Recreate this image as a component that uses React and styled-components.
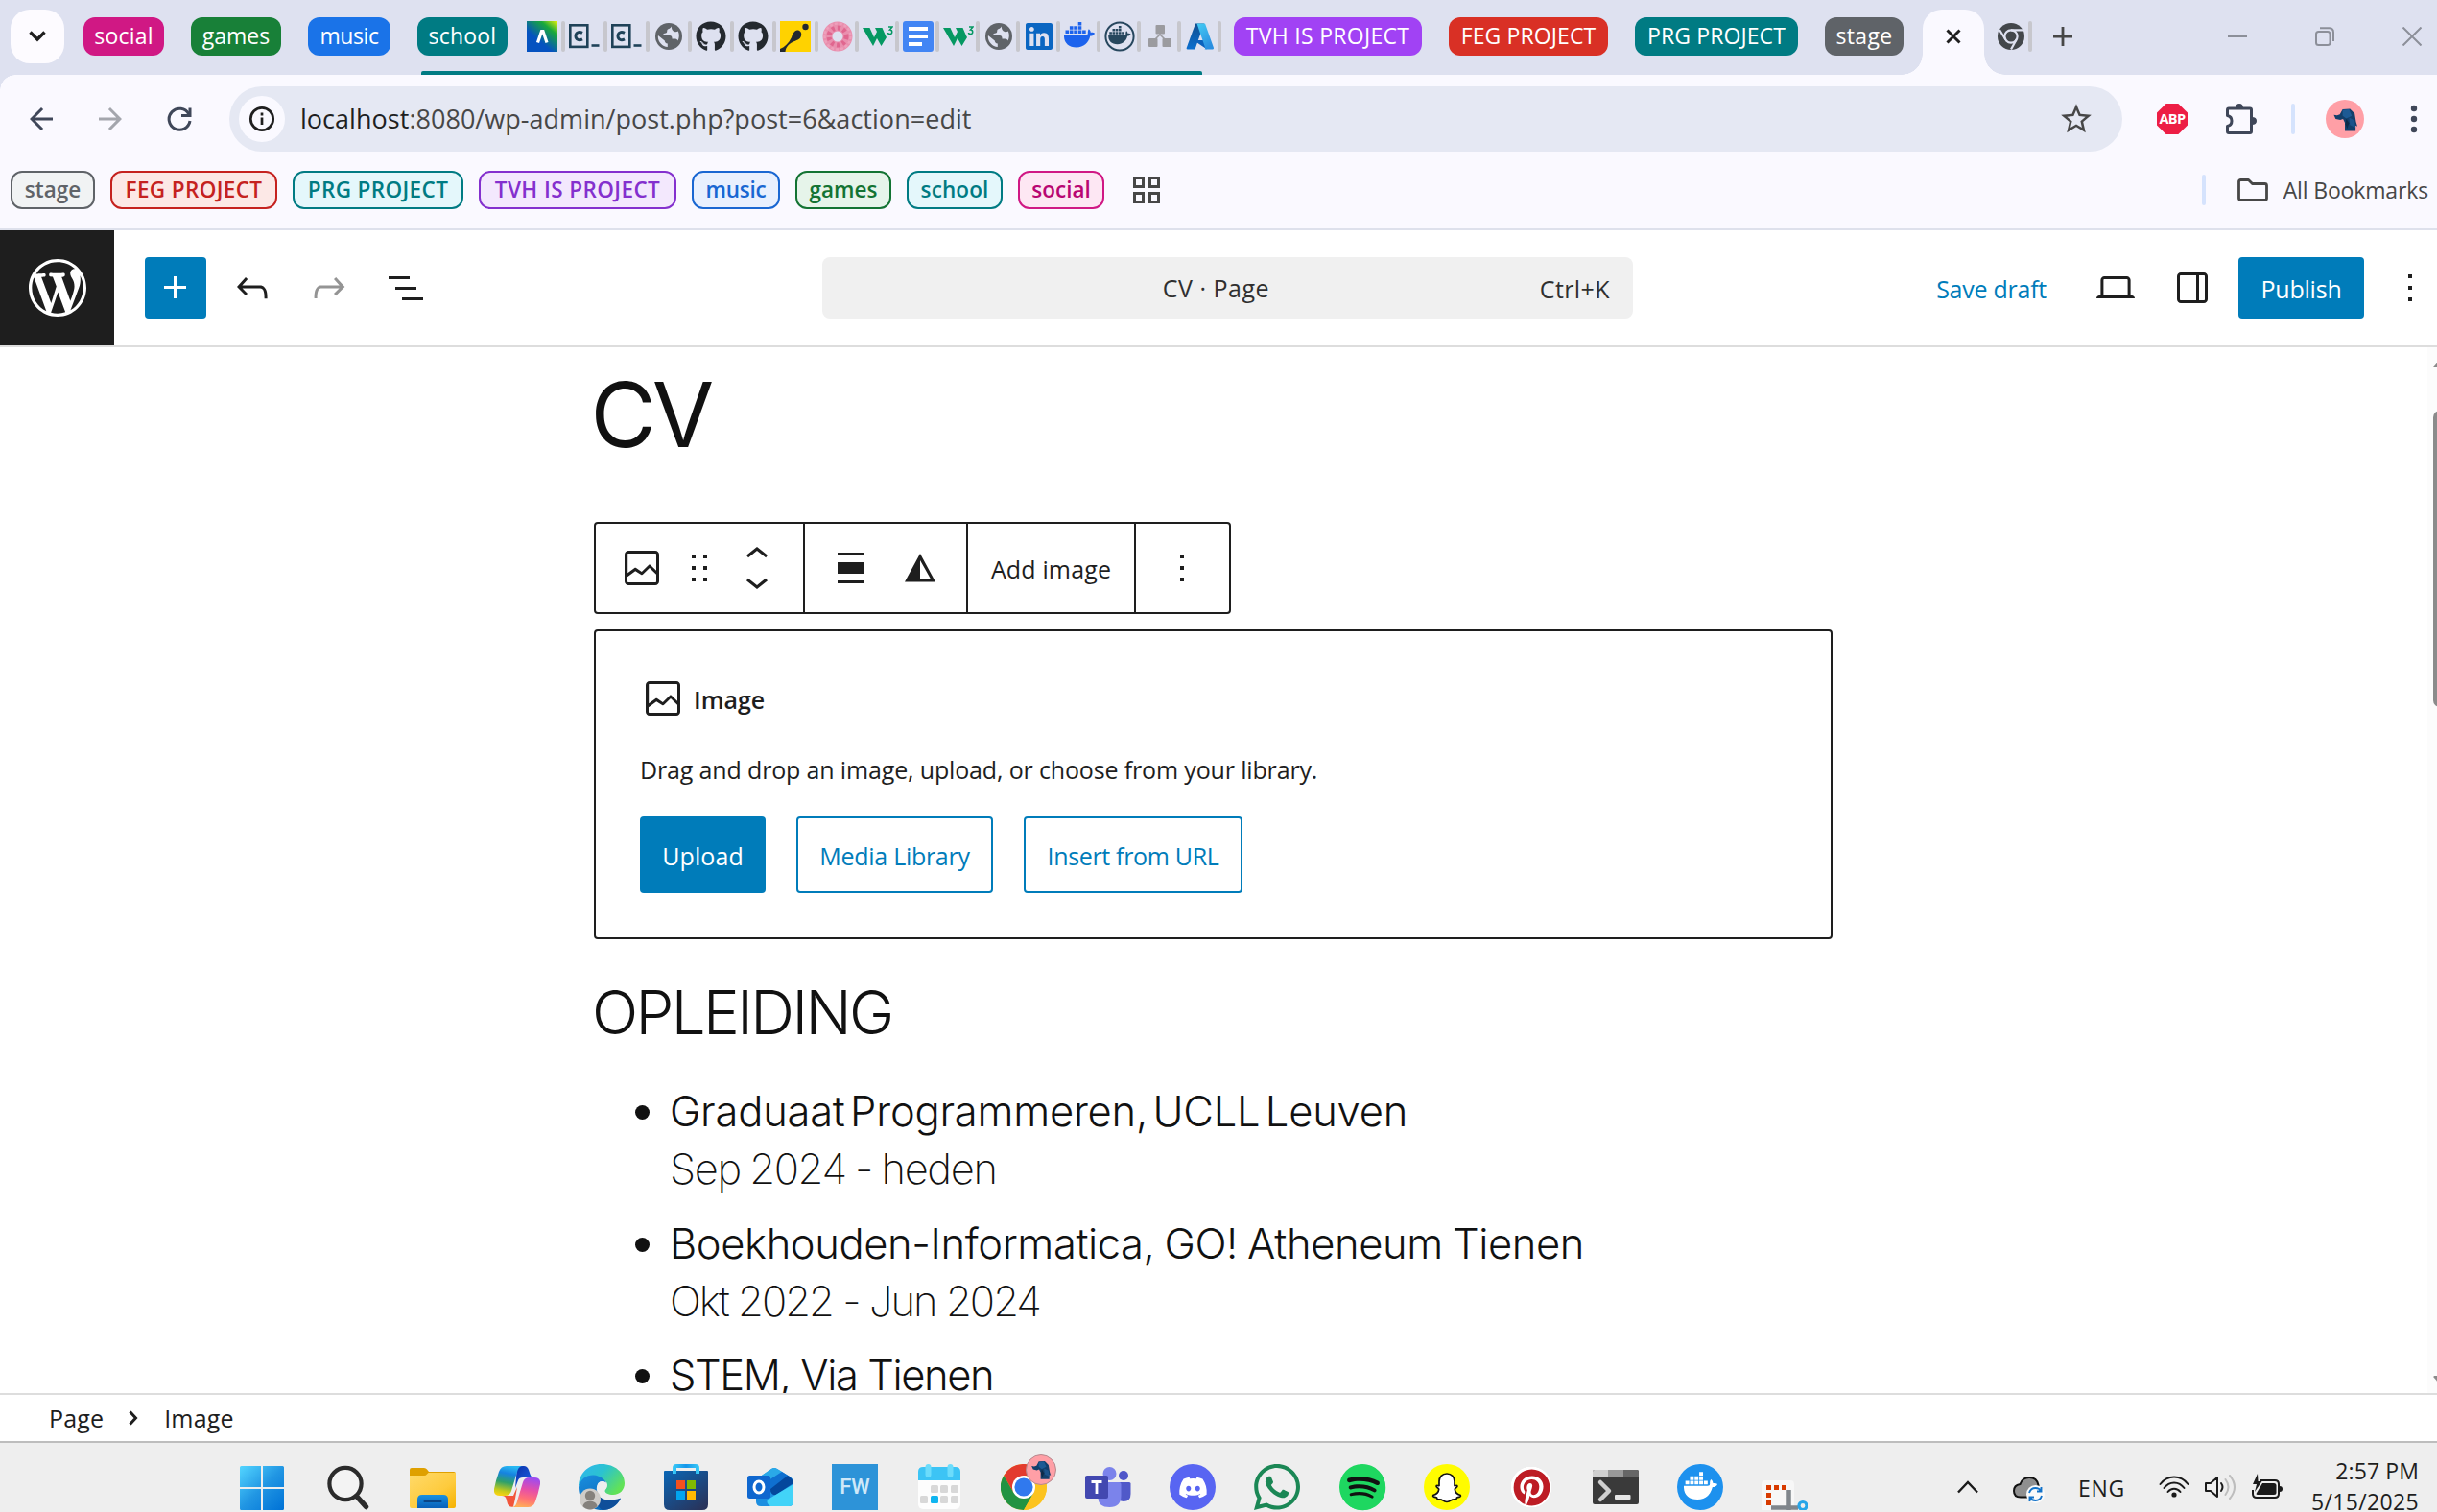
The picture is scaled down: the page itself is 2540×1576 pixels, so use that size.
import React from "react";
import styled, { createGlobalStyle, css } from "styled-components";
import {
  FaGithub, FaLinkedin, FaDiscord, FaWhatsapp, FaSpotify, FaPinterest,
} from "react-icons/fa";
import { MdPublic, MdStarBorder, MdArrowBack, MdArrowForward } from "react-icons/md";

const UI = `"Open Sans", "Noto Sans", sans-serif`;
const DOC = `Inter, Roboto, sans-serif`;

const Global = createGlobalStyle`
  *, *::before, *::after { box-sizing: border-box; }
  html, body { margin: 0; padding: 0; background: #fff; }
  svg { display: block; flex: none; }
`;

const Page = styled.div`
  width: 2540px;
  height: 1576px;
  display: flex;
  flex-direction: column;
  overflow: hidden;
  background: #fff;
  font-family: ${UI};
  color: #1e1e1e;
  white-space: nowrap;
`;

const Label = styled.span`
  letter-spacing: ${(p) => p.$ls || 0}px;
`;

/* ---------- tab strip ---------- */

const TabStrip = styled.div`
  height: 78px;
  flex: none;
  display: flex;
  align-items: center;
  padding: 0 16px 2px 11px;
  background: #dee1f0;
`;

const TabSearch = styled.div`
  width: 56px;
  height: 56px;
  margin-right: 20px;
  border-radius: 20px;
  background: #fdfbff;
  display: grid;
  place-items: center;
`;

const GroupList = styled.div`
  display: flex;
  align-items: center;
  gap: 28px;
`;

const GroupChip = styled.div`
  width: ${(p) => p.$w}px;
  height: 40px;
  padding-bottom: 2px;
  border-radius: 12px;
  display: flex;
  flex: none;
  align-items: center;
  justify-content: center;
  background: ${(p) => p.$bg};
  color: #fff;
  font-size: 23px;
  line-height: 32px;
`;

const OpenGroup = styled.div`
  position: relative;
  display: flex;
  align-items: center;
  height: 76px;
  margin-right: 13px;
  &::after {
    content: "";
    position: absolute;
    left: 4px;
    bottom: -2px;
    width: 814px;
    height: 4px;
    border-radius: 2px 2px 0 0;
    background: #007b83;
  }
`;

const PinnedTabs = styled.div`
  display: flex;
  margin-left: 20px;
`;

const MiniTab = styled.div`
  display: flex;
  align-items: center;
  gap: ${(p) => (p.$wide ? 4 : 2)}px;
  margin-right: ${(p) => (p.$last ? 0 : 4)}px;
  &::after {
    content: "";
    width: 4px;
    height: 32px;
    border-radius: 2px;
    background: #c7c7cd;
  }
`;

const Favicon = styled.div`
  width: 32px;
  height: 32px;
  display: grid;
  place-items: center;
  color: ${(p) => p.$color || "#5f6368"};
`;

const ActiveTab = styled.div`
  position: relative;
  width: 64px;
  height: 68px;
  margin: 0 12px -2px 20px;
  align-self: flex-end;
  padding-bottom: 12px;
  display: grid;
  place-items: center;
  border-radius: 20px 20px 0 0;
  background: #faf9ff;
  &::before, &::after {
    content: "";
    position: absolute;
    bottom: 0;
    width: 22px;
    height: 22px;
  }
  &::before {
    left: -22px;
    background: radial-gradient(circle at 0 0, transparent 21.5px, #faf9ff 22px);
  }
  &::after {
    right: -22px;
    background: radial-gradient(circle at 100% 0, transparent 21.5px, #faf9ff 22px);
  }
`;

const NewTab = styled.div`
  margin-left: 18px;
`;

const WindowControls = styled.div`
  display: flex;
  gap: 71px;
  margin-left: auto;
`;

/* ---------- address row ---------- */

const AddressRow = styled.div`
  height: 92px;
  flex: none;
  display: flex;
  align-items: center;
  padding-left: 15px;
  background: radial-gradient(circle at 16px 16px, #faf9ff 15.5px, #dee1f0 16px) 0 0 / 16px 16px no-repeat, #faf9ff;
`;

const NavButtons = styled.div`
  display: flex;
  gap: 16px;
  margin-right: 24px;
`;

const IconBox = styled.div`
  width: ${(p) => p.$w || 56}px;
  height: ${(p) => p.$w || 56}px;
  flex: none;
  display: grid;
  place-items: center;
  color: ${(p) => p.$color || "#3f4759"};
`;

const Omnibox = styled.div`
  width: 1973px;
  flex: none;
  height: 68px;
  padding: 0 24px 0 10px;
  border-radius: 34px;
  background: #e5e8f3;
  display: flex;
  align-items: center;
`;

const InfoBadge = styled.div`
  width: 48px;
  height: 48px;
  border-radius: 50%;
  background: #faf9ff;
  display: grid;
  place-items: center;
`;

const Url = styled.div`
  flex: 1;
  margin-left: 16px;
  font-size: 27px;
  line-height: 40px;
  letter-spacing: 0.03px;
  color: #474747;
  b { font-weight: 400; color: #1f1f1f; }
`;

const Extensions = styled.div`
  display: flex;
  align-items: center;
  gap: 16px;
  margin-left: 24px;
`;

const AbpBadge = styled.div`
  width: 32px;
  height: 32px;
  background: #ed1e45;
  clip-path: polygon(30% 0, 70% 0, 100% 30%, 100% 70%, 70% 100%, 30% 100%, 0 70%, 0 30%);
  color: #fff;
  display: grid;
  place-items: center;
  font: 700 14.5px/20px ${UI};
  letter-spacing: -0.6px;
`;

const Divider = styled.div`
  width: 4px;
  height: 32px;
  flex: none;
  margin: ${(p) => p.$m || "0"};
  border-radius: 2px;
  background: #d5e3fd;
`;

const Avatar = styled.div`
  width: ${(p) => p.$s}px;
  height: ${(p) => p.$s}px;
  flex: none;
  border-radius: 50%;
  background: #ff9fa6;
  border: ${(p) => (p.$ring ? "1.5px solid #b58a8f" : "0")};
  display: grid;
  place-items: center;
`;

const MenuDots = styled.div`
  margin-left: 48px;
  color: #3f4759;
`;

/* ---------- bookmarks ---------- */

const BookmarkBar = styled.div`
  height: 70px;
  flex: none;
  display: flex;
  align-items: center;
  gap: 16px;
  padding: 0 0 12px 11px;
  border-bottom: 2px solid #dee1ec;
  background: #faf9ff;
`;

const Bookmark = styled.div`
  width: ${(p) => p.$w}px;
  height: 40px;
  padding-bottom: 1px;
  flex: none;
  display: flex;
  align-items: center;
  justify-content: center;
  border: 2px solid ${(p) => p.$line};
  border-radius: 12px;
  background: ${(p) => p.$bg};
  color: ${(p) => p.$ink || p.$line};
  font-size: 22.5px;
  font-weight: 600;
  line-height: 32px;
`;

const AppsGrid = styled.div`
  display: grid;
  grid-template-columns: 12px 12px;
  gap: 4px;
  margin-left: 14px;
  i { height: 12px; border: 3px solid #474747; }
`;

const AllBookmarks = styled.div`
  display: flex;
  align-items: center;
  gap: 16px;
  margin-left: auto;
  padding-right: 9px;
  font-size: 23px;
  line-height: 32px;
  color: #474747;
  span { padding-bottom: 1px; }
`;

/* ---------- editor header ---------- */

const EditorHeader = styled.div`
  height: 122px;
  flex: none;
  display: flex;
  align-items: center;
  border-bottom: 2px solid #ddd;
  background: #fff;
`;

const SiteLogo = styled.div`
  width: 119px;
  height: 120px;
  display: grid;
  place-items: center;
  background: #1e1e1e;
  color: #fff;
`;

const DocTools = styled.div`
  width: 738px;
  padding-left: 32px;
  display: flex;
  align-items: center;
  gap: 16px;
`;

const ToolButton = styled.div`
  width: 64px;
  height: 64px;
  flex: none;
  display: grid;
  place-items: center;
  border-radius: 4px;
  ${(p) => p.$primary && css`background: #007cba; color: #fff;`}
  ${(p) => p.$off && css`color: #949494;`}
`;

const CommandBar = styled.div`
  width: 845px;
  height: 64px;
  border-radius: 8px;
  background: #f0f0f0;
  display: grid;
  grid-template-columns: 1fr auto 1fr;
  align-items: center;
  padding: 0 24px;
  font-size: 25px;
  line-height: 34px;
  color: #2f2f2f;
`;

const DocTitle = styled.div`
  grid-column: 2;
  padding: 0 24px 0 0;
`;

const Shortcut = styled.div`
  justify-self: end;
  padding-top: 2px;
`;

const Settings = styled.div`
  display: flex;
  align-items: center;
  gap: 16px;
  margin: 0 -4px 0 auto;
`;

const TextButton = styled.div`
  height: ${(p) => p.$h || 64}px;
  width: ${(p) => (p.$w ? p.$w + "px" : "auto")};
  padding: 2px ${(p) => (p.$w ? 0 : 24)}px 0;
  flex: none;
  display: flex;
  align-items: center;
  justify-content: center;
  border-radius: 4px;
  font-size: 25px;
  line-height: 34px;
  color: #007cba;
  ${(p) => p.$kind === "primary" && css`background: #007cba; color: #fff;`}
  ${(p) => p.$kind === "outline" && css`border: 2px solid #007cba;`}
`;

/* ---------- canvas ---------- */

const Canvas = styled.div`
  height: 1090px;
  flex: none;
  display: flex;
  overflow: hidden;
`;

const Document = styled.div`
  flex: 1;
  padding-left: 619px;
  color: #111;
  font-family: ${DOC};
`;

const Title = styled.h1`
  margin: 0 0 42px;
  height: 140px;
  font-size: 93.5px;
  line-height: 140px;
  font-weight: 380;
  letter-spacing: -4px;
  text-indent: -3.5px;
`;

const BlockToolbar = styled.div`
  width: 664px;
  height: 96px;
  margin-bottom: 16px;
  display: flex;
  border: 2px solid #1e1e1e;
  border-radius: 4px;
  color: #1e1e1e;
  font-family: ${UI};
`;

const ToolGroup = styled.div`
  width: ${(p) => p.$w}px;
  padding-left: ${(p) => (p.$center ? 0 : 24)}px;
  display: flex;
  align-items: center;
  justify-content: ${(p) => (p.$center ? "center" : "flex-start")};
  gap: ${(p) => p.$gap || 0}px;
  border-right: 2px solid #1e1e1e;
  font-size: 25px;
  &:last-child { border-right: 0; padding-right: 2px; }
  span { padding-top: 2px; }
`;

const Movers = styled.div`
  display: flex;
  flex-direction: column;
`;

const Placeholder = styled.div`
  width: 1291px;
  height: 323px;
  padding: 46px;
  border: 2px solid #1e1e1e;
  border-radius: 4px;
  color: #1e1e1e;
  font-family: ${UI};
  font-size: 25px;
`;

const BlockName = styled.div`
  display: flex;
  align-items: center;
  gap: 8px;
  font-weight: 600;
  span { padding-top: 2px; }
`;

const Instructions = styled.div`
  margin: 34px 0 33px;
  line-height: 32px;
`;

const Actions = styled.div`
  display: flex;
  gap: 32px;
`;

const Heading = styled.h2`
  margin: 40px 0 37px;
  font-size: 63.5px;
  line-height: 72px;
  font-weight: 340;
  letter-spacing: -2.6px;
  text-indent: -2px;
`;

const Entries = styled.ul`
  margin: 0;
  padding: 0 0 0 43px;
  list-style: none;
  display: flex;
  flex-direction: column;
  gap: 17.5px;
`;

const Entry = styled.li`
  display: grid;
  grid-template-columns: 36px 1fr;
  font-size: 43.5px;
  line-height: 60px;
`;

const Bullet = styled.i`
  width: 15px;
  height: 15px;
  margin-top: 24px;
  border-radius: 50%;
  background: #111;
`;

const EntryLine = styled.div`
  grid-column: 2;
  font-weight: ${(p) => (p.$light ? 255 : 360)};
  letter-spacing: ${(p) => p.$ls}px;
  word-spacing: ${(p) => p.$ws || 0}px;
`;

const ScrollTrack = styled.div`
  width: 10px;
  height: 100%;
  padding: 12px 0 9px 6px;
  display: flex;
  flex-direction: column;
  background: #fcfcfc;
  overflow: hidden;
`;

const ScrollThumb = styled.div`
  width: 14px;
  height: 309px;
  flex: none;
  margin: 45px 0 auto;
  border-radius: 7px;
  background: #8b8b8b;
`;

/* ---------- footer ---------- */

const Breadcrumb = styled.div`
  height: 52px;
  flex: none;
  display: flex;
  align-items: center;
  padding-left: 51px;
  border-top: 2px solid #ddd;
  border-bottom: 2px solid #bdbdbd;
  font-size: 25px;
  svg { margin: 0 27px 0 26px; }
`;

const Taskbar = styled.div`
  flex: 1;
  min-height: 0;
  display: flex;
  align-items: flex-start;
  padding: 22px 19px 0 249px;
  background: #eee;
`;

const Apps = styled.div`
  display: flex;
  gap: 40px;
`;

const AppSlot = styled.div`
  position: relative;
  width: 48px;
  height: 48px;
  margin-right: ${(p) => p.$mr || 0}px;
`;

const ProfileDot = styled.div`
  position: absolute;
  left: 26px;
  top: -10px;
`;

const Disc = styled.div`
  width: 48px;
  height: 48px;
  border-radius: 50%;
  display: grid;
  place-items: center;
  background: ${(p) => p.$bg};
  color: #fff;
`;

const SpotifyDisc = styled(Disc)`
  background: radial-gradient(circle, #111 60%, #1ed760 62%);
`;

const PinDisc = styled(Disc)`
  background: radial-gradient(circle, #fff 21px, transparent 21.5px);
  color: #bd1c24;
`;

const FwTile = styled.div`
  width: 48px;
  height: 48px;
  display: grid;
  place-items: center;
  background: #2d93d8;
  color: #cfe8f8;
  font: 500 22px/26px Roboto, sans-serif;
`;

const Tray = styled.div`
  height: 48px;
  margin-left: auto;
  display: flex;
  align-items: center;
  font-size: 23px;
`;

const CloudBox = styled.div`
  margin-left: 36px;
  padding-top: 4px;
`;

const Lang = styled.div`
  margin: 0 35px;
  padding-top: 2px;
`;

const TrayIcons = styled.div`
  display: flex;
  align-items: center;
  gap: 16px;
`;

const Clock = styled.div`
  width: 142px;
  align-self: flex-start;
  margin-top: -9px;
  text-align: right;
  line-height: 32px;
`;

/* ---------- drawings ---------- */

const Glyph = ({ d, size = 48 }) => (
  <svg width={size} height={size} viewBox="0 0 24 24" fill="currentColor"><path d={d} /></svg>
);

const G = {
  plus: "M11 12.5V17.5H12.5V12.5H17.5V11H12.5V6H11V11H6V12.5H11Z",
  undo: "M18.3 11.7c-.6-.6-1.4-.9-2.3-.9H6.7l2.9-3.3-1.1-1-4.5 5L8.5 16l1-1-2.7-2.7H16c.5 0 .9.2 1.3.5 1 1 1 3.4 1 4.5v.3h1.5v-.2c0-1.5 0-4.3-1.5-5.7z",
  redo: "M15.6 6.5l-1.1 1 2.9 3.3H8c-.9 0-1.7.3-2.3.9-1.4 1.5-1.4 4.2-1.4 5.6v.2h1.5v-.3c0-1.1 0-3.5 1-4.5.3-.3.7-.5 1.3-.5h9.2L14.5 15l1.1 1.1 4.6-4.6-4.6-5z",
  list: "M3 6h11v1.5H3V6Zm3.5 5.5h11V13h-11v-1.5ZM21 17H10v1.5h11V17Z",
  desktop: "M20.5 16h-.7V8c0-1.1-.9-2-2-2H6.2c-1.1 0-2 .9-2 2v8h-.7c-.8 0-1.5.7-1.5 1.5h20c0-.8-.7-1.5-1.5-1.5zM5.7 8c0-.3.2-.5.5-.5h11.6c.3 0 .5.2.5.5v7.6H5.7V8z",
  drawer: "M18 4H6c-1.1 0-2 .9-2 2v12c0 1.1.9 2 2 2h12c1.1 0 2-.9 2-2V6c0-1.1-.9-2-2-2zm-4 14.5H6c-.3 0-.5-.2-.5-.5V6c0-.3.2-.5.5-.5h8v13zm4.5-.5c0 .3-.2.5-.5.5h-2.5v-13H18c.3 0 .5.2.5.5v12z",
  more: "M13 19h-2v-2h2v2zm0-6h-2v-2h2v2zm0-6h-2V5h2v2z",
  image: "M19 3H5c-1.1 0-2 .9-2 2v14c0 1.1.9 2 2 2h14c1.1 0 2-.9 2-2V5c0-1.1-.9-2-2-2zM5 4.5h14c.3 0 .5.2.5.5v8.4l-3-2.9c-.3-.3-.8-.3-1 0L11.9 14 9 12c-.3-.2-.6-.2-.8 0l-3.6 2.6V5c-.1-.3.1-.5.4-.5zm14 15H5c-.3 0-.5-.2-.5-.5v-2.4l4.1-3 3 1.9c.3.2.7.2.9-.1L16 12l3.5 3.4V19c0 .3-.2.5-.5.5z",
  drag: "M8 7h2V5H8v2zm0 6h2v-2H8v2zm0 6h2v-2H8v2zm6-14v2h2V5h-2zm0 8h2v-2h-2v2zm0 6h2v-2h-2v2z",
  up: "M6.5 12.4L12 8l5.5 4.4-.9 1.2L12 10l-4.5 3.6-1-1.2z",
  down: "M17.5 11.6L12 16l-5.5-4.4.9-1.2L12 14l4.5-3.6 1 1.2z",
  align: "M19 5.5H5V4h14v1.5ZM19 20H5v-1.5h14V20ZM5 9h14v6H5V9Z",
  wordpress: "M20 10c0-5.51-4.49-10-10-10C4.48 0 0 4.49 0 10c0 5.52 4.48 10 10 10 5.51 0 10-4.48 10-10zM7.78 15.37L4.37 6.22c.55-.02 1.17-.08 1.17-.08.5-.06.44-1.13-.06-1.11 0 0-1.45.11-2.37.11-.18 0-.37 0-.58-.01C4.12 2.69 6.87 1.11 10 1.11c2.33 0 4.45.87 6.05 2.34-.68-.11-1.65.39-1.65 1.58 0 .74.45 1.36.9 2.1.35.61.55 1.36.55 2.46 0 1.49-1.4 5-1.4 5l-3.03-8.37c.54-.02.82-.17.82-.17.5-.05.44-1.25-.06-1.22 0 0-1.44.12-2.38.12-.87 0-2.33-.12-2.33-.12-.5-.03-.56 1.2-.06 1.22l.92.08 1.26 3.41zM17.41 10c.24-.64.74-1.87.43-4.25.7 1.29 1.05 2.71 1.05 4.25 0 3.29-1.73 6.24-4.4 7.78.97-2.59 1.94-5.2 2.92-7.78zM6.1 18.09C3.12 16.65 1.11 13.53 1.11 10c0-1.3.23-2.48.72-3.59C3.25 10.3 4.67 14.2 6.1 18.09zm4.03-6.63l2.58 6.98c-.86.29-1.76.45-2.71.45-.79 0-1.57-.11-2.29-.33.81-2.38 1.63-4.74 2.42-7.1z",
};

const Elephant = ({ size }) => (
  <svg width={size} height={size} viewBox="0 0 28 28">
    <path d="M1.500 9l3.500.5 3-1 3-5.500 8-.5 5 5 1.500 9 1.500 5-2-1v6H13.500v-9l-2-4-3 1-5-1z" fill="#123f6b" />
    <path d="M11 4l7-1 3 7-6 3-4-3z" fill="#1d5a94" />
    <path d="M18 12l6 3 1 8-6-3z" fill="#1b528a" />
    <path d="M15 13l3 5-2 6-2-5z" fill="#0c2a48" />
  </svg>
);

const CTerminal = () => (
  <svg width="32" height="32" viewBox="0 0 32 32" fill="none" stroke="#1f4258">
    <rect x="1.3" y="4.3" width="18" height="22.6" strokeWidth="2.600" />
    <path d="M14 12.400c-3.800-2-7-.2-7 3.200s3.200 5.200 7 3.200" strokeWidth="3" />
    <path d="M23.500 25.500h8" strokeWidth="2.600" />
  </svg>
);

const W3 = () => (
  <svg width="32" height="32" viewBox="0 0 32 32" fill="none" stroke="#059862">
    <path d="M0 7h7.500l4.500 10 3-6-2-4h7.500l3 7 1.500 3-5.500 9-4.500-8-4 8z" fill="#059862" stroke="none" />
    <path d="M27 6h4l-2.500 3c3 0 3 4.500 0 4.500-1 0-2-.5-2-1.500" strokeWidth="1.500" />
  </svg>
);

const Whale = ({ size, color, ring }) => (
  <svg width={size} height={size} viewBox="0 0 32 32">
    {ring && <circle cx="16" cy="16" r="14.600" fill="none" stroke={color} strokeWidth="2" />}
    <g transform={ring ? "translate(4.200 4.200) scale(.73)" : undefined} fill={color}>
      <path d="M0 14.500h22.500c1.800 0 2.500-.8 2.300-2.600-.1-1.500.3-2.700 1-3.600 1.300 1 1.900 2.200 2 3.600 1.500-.2 3.200 0 4.200.9-.8 2-2.500 2.800-4.700 2.800C25.500 23 20.500 27.500 13 27.500 4.500 27.500-.4 22.500 0 14.500z" />
      <path d="M1.500 9.500h3.600V13H1.500zM5.900 9.500h3.600V13H5.900zM10.300 9.500h3.600V13h-3.600zM14.700 9.500h3.600V13h-3.600zM5.900 5.300h3.600v3.500H5.900zM10.300 5.300h3.600v3.500h-3.600zM14.700 5.300h3.600v3.500h-3.600zM14.700 1.100h3.600v3.500h-3.600zM19.100 9.500h3.600V13h-3.600z" />
    </g>
  </svg>
);

const ChromeMono = () => (
  <svg width="28" height="28" viewBox="0 0 28 28">
    <circle cx="14" cy="14" r="14" fill="#43474b" />
    <circle cx="14" cy="14" r="6.600" fill="none" stroke="#dee1f0" strokeWidth="2.200" />
    <path d="M14 7.400h12.600M8.300 17.300L2 7M19.700 17.300L14 27.500" stroke="#dee1f0" strokeWidth="2.200" fill="none" />
  </svg>
);

const Globe = () => (
  <svg width="32" height="32" viewBox="0 0 32 32">
    <circle cx="16" cy="16" r="14" fill="#5f6368" />
    <path d="M19 5.500c-1 2-3.500 2.500-4.500 3.500-.5 1.500 0 3-1.500 3.500-2 .5-3 .5-3 2.500h7c2 0 2.500 1.500 2.500 3.500H23c1.500 0 2 1 2.500 2 1.500-3 1.800-6.500.3-10-1 .5-2.300 1-3.800.5-2-.5-3.500-3-3-5.500zM4.800 16c0 6 4.700 10.500 10 11v-3.500c-2 0-3-1.500-3-3L5 15z" fill="#dee1f0" />
  </svg>
);

const favicons = [
  { k: "a", wide: 1, el: (
    <svg width="32" height="32" viewBox="0 0 32 32">
      <defs><linearGradient id="fa" x1="1" y1="0" x2=".25" y2=".9"><stop offset="0" stopColor="#e8f20a" /><stop offset=".3" stopColor="#18a83c" /><stop offset=".75" stopColor="#0552c0" /></linearGradient></defs>
      <path d="M0 0h32v32H0z" fill="url(#fa)" />
      <path d="M11.500 22.500l4-12h1.500l4 12" fill="none" stroke="#fff" strokeWidth="3.200" />
    </svg>) },
  { k: "b", wide: 1, el: <CTerminal /> },
  { k: "c", wide: 1, el: <CTerminal /> },
  { k: "d", wide: 1, el: <Globe /> },
  { k: "e", wide: 1, color: "#24292f", el: <FaGithub size={32} /> },
  { k: "f", wide: 1, color: "#24292f", el: <FaGithub size={32} /> },
  { k: "g", wide: 1, el: (
    <svg width="32" height="32" viewBox="0 0 32 32">
      <path d="M0 0h32v32H0z" fill="#ffd200" />
      <circle cx="26.500" cy="6" r="3.200" fill="#24292f" />
      <path d="M0 32v-3c5-2 9-6 12-12 1-4 3-7 6-7.500 3 0 5 2.500 4 6-1 4-5 4.500-9 6.500-4 2-7 5-7.500 10z" fill="#24292f" />
    </svg>) },
  { k: "h", el: (
    <svg width="32" height="32" viewBox="0 0 32 32" fill="none">
      <circle cx="16" cy="16" r="10.500" stroke="#e98fae" strokeWidth="10" />
      <circle cx="16" cy="16" r="9" stroke="#e0668f" strokeWidth="5" strokeDasharray="3 3" />
      <circle cx="16" cy="16" r="13.500" stroke="#ee9fbb" strokeWidth="2.500" strokeDasharray="3 2" />
    </svg>) },
  { k: "i", el: <W3 /> },
  { k: "j", el: (
    <svg width="32" height="32" viewBox="0 0 32 32">
      <rect width="32" height="32" rx="3" fill="#4285f4" />
      <path d="M6 6h20v4H6zM6 14h20v4H6zM6 22h14v4H6z" fill="#fff" />
    </svg>) },
  { k: "k", el: <W3 /> },
  { k: "l", el: <Globe /> },
  { k: "m", color: "#0a66c2", el: <FaLinkedin size={32} /> },
  { k: "n", el: <Whale size={32} color="#1d63ed" /> },
  { k: "o", el: <Whale size={32} color="#27475e" ring /> },
  { k: "p", el: (
    <svg width="32" height="32" viewBox="0 0 32 32" fill="#9b9b9f">
      <path d="M16 9v5L8 22M16 14l8 8" stroke="#9b9b9f" strokeWidth="1.600" fill="none" />
      <rect x="11.500" y="4" width="9.500" height="9.500" rx="1" /><rect x="4" y="18" width="9.500" height="9" rx="1" /><rect x="18.500" y="18" width="9.500" height="9" rx="1" />
    </svg>) },
  { k: "q", last: 1, el: (
    <svg width="32" height="32" viewBox="0 0 32 32">
      <defs>
        <linearGradient id="az" x1="0" y1="0" x2="0" y2="1"><stop offset="0" stopColor="#124f8f" /><stop offset="1" stopColor="#0a6fd0" /></linearGradient>
        <linearGradient id="az2" x1="0" y1="0" x2=".5" y2="1"><stop offset="0" stopColor="#43ccf5" /><stop offset="1" stopColor="#2a8fe0" /></linearGradient>
      </defs>
      <path d="M11 2.500h9L10.500 29.500H2.500q-1.200-.3-.8-1.500z" fill="url(#az)" />
      <path d="M9 20h12l2 9.500z" fill="#0b62bd" />
      <path d="M12.500 2.500h8.500l9 25.500q.2 1.300-1 1.500H20.500q1-.6.5-2z" fill="url(#az2)" />
    </svg>) },
];

const groupsLeft = [
  { t: "social", w: 84, bg: "#d01884", ls: 0.2 },
  { t: "games", w: 94, bg: "#188038", ls: 0 },
  { t: "music", w: 86, bg: "#1a73e8", ls: -0.4 },
];
const groupsRight = [
  { t: "TVH IS PROJECT", w: 196, bg: "#a142f4", ls: 0.3 },
  { t: "FEG PROJECT", w: 166, bg: "#d93025", ls: 0.1 },
  { t: "PRG PROJECT", w: 170, bg: "#007b83", ls: 0.1 },
  { t: "stage", w: 82, bg: "#5f6368", ls: 0.3 },
];
const bookmarks = [
  { t: "stage", w: 88, line: "#5f6368", bg: "#f1f3f4", ls: 0 },
  { t: "FEG PROJECT", w: 174, line: "#c5221f", bg: "#fce8e6", ls: 0.35 },
  { t: "PRG PROJECT", w: 178, line: "#007b83", bg: "#e4f7fb", ls: 0.35 },
  { t: "TVH IS PROJECT", w: 206, line: "#8430ce", bg: "#f3e8fd", ls: 0.4 },
  { t: "music", w: 92, line: "#1967d2", bg: "#e8f0fe", ls: -0.2 },
  { t: "games", w: 100, line: "#137333", bg: "#e6f4ea", ls: 0 },
  { t: "school", w: 100, line: "#007b83", bg: "#e4f7fb", ls: 0.1 },
  { t: "social", w: 90, line: "#d01884", bg: "#fde7f3", ink: "#b80672", ls: 0 },
];

const entries = [
  [{ t: "Graduaat Programmeren, UCLL Leuven", ls: -0.23, ws: -6.5 }, { t: "Sep 2024 - heden", ls: -1.35, ws: -1.5 }],
  [{ t: "Boekhouden-Informatica, GO! Atheneum Tienen", ls: -0.4, ws: -1.7 }, { t: "Okt 2022 - Jun 2024", ls: -1.95, ws: 0 }],
  [{ t: "STEM, Via Tienen", ls: -1.4, ws: 0 }, null],
];

/* ---------- taskbar drawings ---------- */

const Svg48 = ({ children }) => <svg width="48" height="48" viewBox="0 0 48 48">{children}</svg>;

const WindowsIcon = () => (
  <Svg48>
    <defs><linearGradient id="win" gradientUnits="userSpaceOnUse" x1="2" y1="2" x2="46" y2="48"><stop offset="0" stopColor="#52d4ff" /><stop offset=".5" stopColor="#2196e3" /><stop offset="1" stopColor="#0072d6" /></linearGradient></defs>
    <path d="M2.500 2H23v22H1V3.500Q1 2 2.500 2zM25 2h20.500Q47 2 47 3.500V24H25zM1 26h22v22H2.500Q1 48 1 46.500zM25 26h22v20.500q0 1.500-1.500 1.500H25z" fill="url(#win)" />
  </Svg48>
);
const SearchIcon = () => (
  <Svg48><g fill="none" stroke="#2b2b2b" strokeLinecap="round"><circle cx="21" cy="20.500" r="16.600" fill="#f3f3f3" strokeWidth="4.200" /><path d="M33.500 34.500L42.500 44.500" strokeWidth="5.500" /></g></Svg48>
);
const FolderIcon = () => (
  <Svg48>
    <defs>
      <linearGradient id="fo" x1="0" y1="0" x2="1" y2="1"><stop offset="0" stopColor="#ffda6b" /><stop offset=".6" stopColor="#fecb3d" /><stop offset="1" stopColor="#f5b100" /></linearGradient>
      <linearGradient id="fo2" x1="0" y1="0" x2="0" y2="1"><stop offset="0" stopColor="#1791e0" /><stop offset="1" stopColor="#0a5fb8" /></linearGradient>
    </defs>
    <path d="M0 6q0-2 2-2h13q2 0 3 1.500l2 2.500h26q2 0 2 2v4H0z" fill="#dfa000" />
    <path d="M0 12h15q2 0 3-1.500L19.500 9H48v35q0 2-2 2H2q-2 0-2-2z" fill="url(#fo)" />
    <path d="M8 46V37q0-5 5-5h22q5 0 5 5v9z" fill="url(#fo2)" />
    <path d="M15.500 39h17" stroke="#0b4586" strokeWidth="2.200" strokeLinecap="round" />
  </Svg48>
);
const CopilotIcon = () => (
  <Svg48>
    <defs>
      <linearGradient id="co1" x1=".5" y1="0" x2=".3" y2="1"><stop offset="0" stopColor="#28b8f2" /><stop offset=".25" stopColor="#1683e0" /><stop offset=".55" stopColor="#2fa06a" /><stop offset=".85" stopColor="#c9cc18" /><stop offset="1" stopColor="#f9d212" /></linearGradient>
      <linearGradient id="co2" x1=".6" y1="0" x2=".4" y2="1"><stop offset="0" stopColor="#9d4cf0" /><stop offset=".4" stopColor="#e64fa8" /><stop offset=".7" stopColor="#ff6f77" /><stop offset="1" stopColor="#ffae58" /></linearGradient>
      <linearGradient id="co3" x1="0" y1="0" x2="1" y2="1"><stop offset="0" stopColor="#0a2fa8" /><stop offset="1" stopColor="#1f6df0" /></linearGradient>
    </defs>
    <path d="M24 2h7q3.500 0 5 4l1.500 4.500q1 3.500 4.500 3.500H30q-4 0-5 3l-3 8z" fill="url(#co3)" />
    <path d="M8 33h12l4-9-2 12-2 8.500q-4 1-6-3L12.500 36q-1-3-4.500-3z" fill="#f2553a" />
    <path d="M13 2h17q-4 0-5.500 4.500L18 28q-1.500 5-7 5H6q-7 0-6-7 2-10 5-18 2-6 8-6z" fill="url(#co1)" />
    <path d="M35 45H18q4 0 5.500-4.500L30 19q1.500-5 7-5h5q7 0 6 7-2 10-5 18-2 6-8 6z" fill="url(#co2)" />
  </Svg48>
);
const EdgeIcon = () => (
  <Svg48>
    <defs>
      <linearGradient id="ed1" x1="0" y1="0" x2="1" y2=".6"><stop offset="0" stopColor="#2fb4f2" /><stop offset=".5" stopColor="#2bc3cf" /><stop offset="1" stopColor="#62e257" /></linearGradient>
      <linearGradient id="ed2" x1="0" y1="0" x2=".6" y2="1"><stop offset="0" stopColor="#1a8fdf" /><stop offset="1" stopColor="#0b67b8" /></linearGradient>
    </defs>
    <path d="M0 24C0 10 10 0 24 0s24 9 24 20c0 7-5 12-12 12-5 0-8.500-2-8.500-4 0-1.500 2.500-3 2.500-6 0-4-3-5-8-6C14 12 4 14 0 24z" fill="url(#ed1)" />
    <path d="M0 24C2 15 9 11 16 11.500c6 .5 11 4 13 8-5-3-11 0-10 8 1 8 9 14 25 8.500-4 8-11 12-19 12C10 48 0 38 0 24z" fill="url(#ed2)" />
    <path d="M19 27c0 8 9 14 25 8.500-4 8-11 12.500-19 12.500-6-3-9-14-6-21z" fill="#0f4f9a" />
    <circle cx="24.500" cy="23" r="5" fill="#eee" />
    <circle cx="12" cy="36.500" r="11" fill="#cfccc8" />
    <circle cx="12" cy="33" r="5.200" fill="#85817c" />
    <path d="M4.500 44c1-7 14-7 15 0-3.500 4.500-11.500 4.500-15 0z" fill="#85817c" />
  </Svg48>
);
const StoreIcon = () => (
  <Svg48>
    <defs>
      <linearGradient id="st" x1="0" y1="0" x2=".8" y2="1"><stop offset="0" stopColor="#0a66b5" /><stop offset="1" stopColor="#28345c" /></linearGradient>
      <linearGradient id="st2" gradientUnits="userSpaceOnUse" x1="10" y1="0" x2="38" y2="0"><stop offset="0" stopColor="#3ccdf8" /><stop offset=".5" stopColor="#1495ea" /><stop offset="1" stopColor="#3ccdf8" /></linearGradient>
    </defs>
    <path d="M1 8q0-1 1-1h44q1 0 1 1v34q0 6-6 6H7q-6 0-6-6z" fill="url(#st)" />
    <path d="M12 10V4q0-2 2-2h20q2 0 2 2v6" fill="none" stroke="url(#st2)" strokeWidth="4" />
    <path d="M14 17h9v9h-9z" fill="#f4511f" /><path d="M25 17h9v9h-9z" fill="#80ba01" /><path d="M14 28h9v9h-9z" fill="#02a4ef" /><path d="M25 28h9v9h-9z" fill="#ffb901" />
  </Svg48>
);
const OutlookIcon = () => (
  <Svg48>
    <path d="M9 16L25 5q3-2 6 0l13 8q4 2.500 4 6v20q0 5-5 5H14q-5 0-5-5z" fill="#1c8ee0" />
    <path d="M9 16L25 5q3-2 6 0l5 3-24 17z" fill="#2aa9e8" />
    <path d="M36 8l8 5-22 18V17z" fill="#0f70d0" />
    <path d="M42 12q6 4 6 8L30 32q-6 1-6-6z" fill="#04479c" />
    <path d="M48 21v18q0 5-5 5H24q-5-3-3-7z" fill="#42d3f8" />
    <rect y="12" width="24" height="24" rx="2.500" fill="#0f67cf" />
    <ellipse cx="12" cy="24" rx="5" ry="6" fill="none" stroke="#fff" strokeWidth="3" />
  </Svg48>
);
const CalendarIcon = () => (
  <Svg48>
    <rect x="2" y="3" width="44" height="44" rx="5" fill="#fdfdfd" />
    <path d="M2 17V8q0-5 5-5h34q5 0 5 5v9z" fill="#3cc4f5" />
    <path d="M12.500 3v8M35.500 3v8" stroke="#6cdcfb" strokeWidth="6" strokeLinecap="round" />
    <g fill="#d8d8d8"><rect x="15" y="22" width="8" height="8" rx="1.500" /><rect x="25" y="22" width="8" height="8" rx="1.500" /><rect x="36" y="22" width="8" height="8" rx="1.500" /><rect x="4" y="33" width="8" height="8" rx="1.500" /><rect x="25" y="33" width="8" height="8" rx="1.500" /><rect x="36" y="33" width="8" height="8" rx="1.500" /></g>
    <rect x="15" y="33" width="8" height="8" rx="1.500" fill="#0fb5f0" />
  </Svg48>
);
const ChromeIcon = () => (
  <Svg48>
    <circle cx="24" cy="24" r="24" fill="#fcc31e" />
    <path d="M3.200 12A24 24 0 0 1 44.800 12H24L13.600 30z" fill="#e33b2e" />
    <path d="M3.200 12A24 24 0 0 0 24 48L34.400 30H13.600z" fill="#229342" />
    <path d="M24 13h21.200A24 24 0 0 1 24 48l10.400-18z" fill="#fcc31e" />
    <circle cx="24" cy="24" r="12" fill="#fff" /><circle cx="24" cy="24" r="9.600" fill="#3079ee" />
  </Svg48>
);
const TeamsIcon = () => (
  <Svg48>
    <circle cx="40" cy="12" r="5" fill="#4f56c9" /><circle cx="25.500" cy="10" r="7" fill="#7b83eb" />
    <path d="M35 19h11q1.500 0 1.500 1.500V31q0 8-7.500 8-3 0-5-2z" fill="#5059c9" />
    <path d="M12 19h23.500q2 0 2 2v12q0 12-12 12t-12-10z" fill="#7b83eb" />
    <rect y="12" width="24" height="24" rx="2" fill="#4248b0" />
    <path d="M6.500 18.500h11M12 18.500V31" stroke="#fff" strokeWidth="2.800" />
  </Svg48>
);
const SnapIcon = () => (
  <Svg48>
    <circle cx="24" cy="24" r="24" fill="#fffc00" />
    <path d="M24 10c5 0 8 3.500 8 8v4.500c1 .5 2.500-.8 3 .6.4 1.300-2.500 1.700-2.700 3 .2 3.200 3 5.500 6 6.400.8 1.700-2.500 2-3.800 2.500-.5.700-.2 1.700-1.200 1.900-1.800-.2-3.500-.4-5 1-1.300 1-2.700 1.600-4.300 1.600s-3-.6-4.300-1.600c-1.500-1.400-3.200-1.200-5-1-1-.2-.7-1.200-1.200-1.900-1.300-.5-4.600-.8-3.800-2.500 3-.9 5.800-3.200 6-6.400-.2-1.300-3.100-1.700-2.700-3 .5-1.400 2-.1 3-.6V18c0-4.500 3-8 8-8z" fill="#fff" stroke="#111" strokeWidth="1.700" />
  </Svg48>
);
const TerminalIcon = () => (
  <Svg48>
    <rect y="6" width="48" height="36" rx="2" fill="#3a3a3a" />
    <path d="M0 14V8q0-2 2-2h14v8z" fill="#cfcfcf" /><path d="M16 6h16v8H16z" fill="#999" /><path d="M32 6h14q2 0 2 2v6H32z" fill="#666" />
    <path d="M8 19l9 9-9 9" fill="none" stroke="#cfcfcf" strokeWidth="4.500" strokeLinecap="round" strokeLinejoin="round" />
    <rect x="23" y="32" width="16.500" height="5" rx="1" fill="#e6e6e6" />
  </Svg48>
);
const SnipIcon = () => (
  <Svg48>
    <rect x="0" y="17" width="34" height="33" rx="4" fill="#f7f7f7" />
    <path d="M5 22h5v5H5zM13 22h5v5h-5zM21 22h5v5h-5zM5 30h5v5H5zM5 38h5v5H5z" fill="#d83b01" />
    <path d="M28.500 27v24M10 45.500h28" stroke="#80868c" strokeWidth="4.500" fill="none" />
    <circle cx="43" cy="43.500" r="4" fill="none" stroke="#27a5e8" strokeWidth="3.200" />
  </Svg48>
);

const WifiIcon = () => (
  <svg width="32" height="26" viewBox="0 0 32 26" fill="none" stroke="#1a1a1a" strokeWidth="2" strokeLinecap="round">
    <path d="M1.500 10C9 0 23 0 30.500 10M5.500 14C11 6.500 21 6.500 26.500 14M9.500 18c3.500-4.500 9.500-4.500 13 0" /><circle cx="16" cy="21" r="2.600" fill="#1a1a1a" stroke="none" />
  </svg>
);
const SoundIcon = () => (
  <svg width="33" height="28" viewBox="0 0 33 28" fill="none" stroke="#1a1a1a" strokeWidth="2" strokeLinecap="round" strokeLinejoin="round">
    <path d="M1 10h5l7-6v20l-7-6H1zM17 10q3 4 0 8" /><path d="M21.500 6q6 8 0 16M26 2q10 12 0 24" stroke="#bdbdbd" />
  </svg>
);
const BatteryIcon = () => (
  <svg width="32" height="28" viewBox="0 0 32 28">
    <path d="M8 7h16q4 0 4 4v10q0 4-4 4H5q-4 0-4-4v-4" fill="none" stroke="#1a1a1a" strokeWidth="2" /><path d="M29 13q3 0 3 3t-3 3z" fill="#1a1a1a" />
    <path d="M11 10h12q2.500 0 2.500 2.500v7q0 2.500-2.500 2.500H6q-1.500 0-1.500-1z" fill="#1a1a1a" />
    <path d="M6 0L1 11h4l-2 8L10.500 8H6.500z" fill="#1a1a1a" />
  </svg>
);
const CloudSync = () => (
  <CloudBox>
    <svg width="33" height="30" viewBox="0 0 33 30">
      <path d="M8 23.500q-7 0-7-6.500 0-6 6.500-7Q10 3 17 3q8 0 9.500 8L27 18l-12 5.500z" fill="#8f8f8f" stroke="#111" strokeWidth="2" />
      <circle cx="23.500" cy="20.500" r="9.500" fill="#fafafa" />
      <path d="M17 19q1.500-5 6.500-5 4 0 5.500 3M30 22q-1.500 5-6.500 5-4 0-5.500-3M29.500 13v4.500H25M17.500 28v-4.500H22" fill="none" stroke="#1272c9" strokeWidth="1.900" />
    </svg>
  </CloudBox>
);

const Chip = ({ g }) => <GroupChip $w={g.w} $bg={g.bg}><Label $ls={g.ls}>{g.t}</Label></GroupChip>;

export default function App() {
  return (
    <Page>
      <Global />
      <TabStrip>
        <TabSearch>
          <svg width="18" height="12" viewBox="0 0 18 12" fill="none" stroke="#1f1f1f" strokeWidth="3.400"><path d="M1.500 1.500L9 9l7.500-7.500" /></svg>
        </TabSearch>
        <GroupList>
          {groupsLeft.map((g) => <Chip key={g.t} g={g} />)}
          <OpenGroup>
            <Chip g={{ t: "school", w: 94, bg: "#007b83", ls: 0.2 }} />
            <PinnedTabs>
              {favicons.map((f) => (
                <MiniTab key={f.k} $wide={f.wide} $last={f.last}><Favicon $color={f.color}>{f.el}</Favicon></MiniTab>
              ))}
            </PinnedTabs>
          </OpenGroup>
        </GroupList>
        <GroupList>{groupsRight.map((g) => <Chip key={g.t} g={g} />)}</GroupList>
        <ActiveTab>
          <svg width="16" height="16" viewBox="0 0 16 16" stroke="#1f1f1f" strokeWidth="3"><path d="M1.500 1.500l13 13M14.500 1.500l-13 13" /></svg>
        </ActiveTab>
        <MiniTab $last><Favicon><ChromeMono /></Favicon></MiniTab>
        <NewTab>
          <svg width="28" height="20" viewBox="0 0 28 20" stroke="#474747" strokeWidth="2.800"><path d="M14 0v20M4 10h20" /></svg>
        </NewTab>
        <WindowControls>
          <svg width="20" height="20" viewBox="0 0 20 20" stroke="#8c8f99" strokeWidth="2"><path d="M0 10h20" /></svg>
          <svg width="20" height="20" viewBox="0 0 20 20" fill="none" stroke="#8c8f99" strokeWidth="2"><rect x="1" y="5" width="14.500" height="14" rx="2.500" /><path d="M5 1.200h9.500q4.500 0 4.500 4.500V15" /></svg>
          <svg width="20" height="20" viewBox="0 0 20 20" stroke="#8c8f99" strokeWidth="2"><path d="M.5.5l19 19M19.500.5l-19 19" /></svg>
        </WindowControls>
      </TabStrip>

      <AddressRow>
        <NavButtons>
          <IconBox><MdArrowBack size={36} /></IconBox>
          <IconBox $color="#a4a6ad"><MdArrowForward size={36} /></IconBox>
          <IconBox>
            <svg width="26" height="26" viewBox="0 0 26 26" fill="none" stroke="currentColor" strokeWidth="3">
              <path d="M22.800 8A11 11 0 1 0 24 15" /><path d="M24 1.500V9.500H15" />
            </svg>
          </IconBox>
        </NavButtons>
        <Omnibox>
          <InfoBadge>
            <svg width="28" height="28" viewBox="0 0 28 28" fill="none" stroke="#1f1f1f" strokeWidth="2.700"><circle cx="14" cy="14" r="11.700" /><path d="M14 12.500V20M14 7.500v3" /></svg>
          </InfoBadge>
          <Url><b>localhost</b>:8080/wp-admin/post.php?post=6&amp;action=edit</Url>
          <IconBox $w={48} $color="#474747"><MdStarBorder size={38} /></IconBox>
        </Omnibox>
        <Extensions>
          <IconBox><AbpBadge>ABP</AbpBadge></IconBox>
          <IconBox>
            <svg width="34" height="34" viewBox="0 0 34 34" fill="none" stroke="currentColor" strokeWidth="3">
              <path d="M2.500 7.500q0-1.500 1.500-1.500H26q1.500 0 1.500 1.500V30q0 1.500-1.500 1.500H4q-1.500 0-1.500-1.500V24.500q4.500-1 4.500-5.500t-4.500-5.500z" strokeLinejoin="round" />
              <path d="M11 5.500q0-4.500 4-4.500t4 4.500zM28 15q5 0 5 4t-5 4z" fill="currentColor" stroke="none" />
            </svg>
          </IconBox>
        </Extensions>
        <Divider $m="0 32px 0 24px" />
        <Avatar $s={40}><Elephant size={27} /></Avatar>
        <MenuDots>
          <svg width="8" height="30" viewBox="0 0 8 30" fill="currentColor"><circle cx="4" cy="4" r="3.200" /><circle cx="4" cy="15" r="3.200" /><circle cx="4" cy="26" r="3.200" /></svg>
        </MenuDots>
      </AddressRow>

      <BookmarkBar>
        {bookmarks.map((b) => (
          <Bookmark key={b.t} $w={b.w} $line={b.line} $bg={b.bg} $ink={b.ink}><Label $ls={b.ls}>{b.t}</Label></Bookmark>
        ))}
        <AppsGrid><i /><i /><i /><i /></AppsGrid>
        <AllBookmarks>
          <Divider $m="0 17px 0 0" />
          <svg width="32" height="24" viewBox="0 0 32 24" fill="none" stroke="#474747" strokeWidth="2.800" strokeLinejoin="round"><path d="M3.500 1.500h8l4 4H28.500q2 0 2 2V20.500q0 2-2 2h-25q-2 0-2-2v-17q0-2 2-2z" /></svg>
          <Label $ls={-0.15}>All Bookmarks</Label>
        </AllBookmarks>
      </BookmarkBar>

      <EditorHeader>
        <SiteLogo>
          <svg width="72" height="72" viewBox="-2 -2 24 24" fill="currentColor"><path d={G.wordpress} /></svg>
        </SiteLogo>
        <DocTools>
          <ToolButton $primary><Glyph d={G.plus} /></ToolButton>
          <ToolButton><Glyph d={G.undo} /></ToolButton>
          <ToolButton $off><Glyph d={G.redo} /></ToolButton>
          <ToolButton><Glyph d={G.list} /></ToolButton>
        </DocTools>
        <CommandBar>
          <DocTitle><Label $ls={0.5}>CV · Page</Label></DocTitle>
          <Shortcut><Label $ls={0.4}>Ctrl+K</Label></Shortcut>
        </CommandBar>
        <Settings>
          <TextButton><Label $ls={-0.25}>Save draft</Label></TextButton>
          <ToolButton><Glyph d={G.desktop} /></ToolButton>
          <ToolButton><Glyph d={G.drawer} /></ToolButton>
          <TextButton $w={131} $kind="primary"><Label $ls={-0.2}>Publish</Label></TextButton>
          <ToolButton><Glyph d={G.more} /></ToolButton>
        </Settings>
      </EditorHeader>

      <Canvas>
        <Document>
          <Title>CV</Title>
          <BlockToolbar>
            <ToolGroup $w={218} $gap={12}>
              <Glyph d={G.image} />
              <Glyph d={G.drag} />
              <Movers>
                <svg width="48" height="28" viewBox="0 5 24 14" fill="currentColor"><path d={G.up} /></svg>
                <svg width="48" height="28" viewBox="0 5 24 14" fill="currentColor"><path d={G.down} /></svg>
              </Movers>
            </ToolGroup>
            <ToolGroup $w={170} $gap={24}>
              <Glyph d={G.align} />
              <svg width="48" height="48" viewBox="0 0 48 48" fill="currentColor"><path d="M24 9L40 38.500H8zM24 16v19.500h11z" fillRule="evenodd" /></svg>
            </ToolGroup>
            <ToolGroup $w={175} $center><Label $ls={0.15}>Add image</Label></ToolGroup>
            <ToolGroup $w={97} $center><Glyph d={G.more} /></ToolGroup>
          </BlockToolbar>
          <Placeholder>
            <BlockName><Glyph d={G.image} /><span>Image</span></BlockName>
            <Instructions><Label $ls={-0.15}>Drag and drop an image, upload, or choose from your library.</Label></Instructions>
            <Actions>
              <TextButton $h={80} $w={131} $kind="primary"><Label $ls={0.1}>Upload</Label></TextButton>
              <TextButton $h={80} $w={205} $kind="outline"><Label $ls={-0.29}>Media Library</Label></TextButton>
              <TextButton $h={80} $w={228} $kind="outline"><Label $ls={-0.33}>Insert from URL</Label></TextButton>
            </Actions>
          </Placeholder>
          <Heading>OPLEIDING</Heading>
          <Entries>
            {entries.map(([a, b]) => (
              <Entry key={a.t}>
                <Bullet />
                <EntryLine $ls={a.ls} $ws={a.ws}>{a.t}</EntryLine>
                {b && <EntryLine $light $ls={b.ls} $ws={b.ws}>{b.t}</EntryLine>}
              </Entry>
            ))}
          </Entries>
        </Document>
        <ScrollTrack>
          <svg width="14" height="9" viewBox="0 0 14 9" fill="#8b8b8b"><path d="M7 0l6.500 7.500q.5 1.500-1 1.500h-11Q0 9 .5 7.500z" /></svg>
          <ScrollThumb />
          <svg width="14" height="9" viewBox="0 0 14 9" fill="#8b8b8b"><path d="M7 9L.5 1.500Q0 0 1.500 0h11q1.500 0 1 1.500z" /></svg>
        </ScrollTrack>
      </Canvas>

      <Breadcrumb>
        <Label $ls={0.15}>Page</Label>
        <svg width="10" height="16" viewBox="0 0 10 16" fill="none" stroke="#1e1e1e" strokeWidth="3"><path d="M1.500 1.500L7.500 8l-6 6.500" /></svg>
        <Label $ls={0.2}>Image</Label>
      </Breadcrumb>

      <Taskbar>
        <Apps>
          <AppSlot $mr={2}><WindowsIcon /></AppSlot>
          <AppSlot><SearchIcon /></AppSlot>
          <AppSlot><FolderIcon /></AppSlot>
          <AppSlot><CopilotIcon /></AppSlot>
          <AppSlot><EdgeIcon /></AppSlot>
          <AppSlot><StoreIcon /></AppSlot>
          <AppSlot><OutlookIcon /></AppSlot>
          <AppSlot><FwTile>FW</FwTile></AppSlot>
          <AppSlot><CalendarIcon /></AppSlot>
          <AppSlot><ChromeIcon /><ProfileDot><Avatar $s={32} $ring><Elephant size={22} /></Avatar></ProfileDot></AppSlot>
          <AppSlot><TeamsIcon /></AppSlot>
          <AppSlot><Disc $bg="#5865f2"><FaDiscord size={31} /></Disc></AppSlot>
          <AppSlot $mr={1}><FaWhatsapp size={48} color="#1b8755" viewBox="0 32 448 448" /></AppSlot>
          <AppSlot><SpotifyDisc><FaSpotify size={49} color="#1ed760" /></SpotifyDisc></AppSlot>
          <AppSlot><SnapIcon /></AppSlot>
          <AppSlot><PinDisc><FaPinterest size={39} /></PinDisc></AppSlot>
          <AppSlot><TerminalIcon /></AppSlot>
          <AppSlot><Disc $bg="#1d91ee"><Whale size={35} color="#fff" /></Disc></AppSlot>
          <AppSlot><SnipIcon /></AppSlot>
        </Apps>
        <Tray>
          <svg width="22" height="14" viewBox="0 0 22 14" fill="none" stroke="#1a1a1a" strokeWidth="2.400"><path d="M1 12.500L11 2l10 10.500" /></svg>
          <CloudSync />
          <Lang><Label $ls={0.7}>ENG</Label></Lang>
          <TrayIcons><WifiIcon /><SoundIcon /><BatteryIcon /></TrayIcons>
          <Clock><Label $ls={0.1}>2:57 PM</Label><br /><Label $ls={0.35}>5/15/2025</Label></Clock>
        </Tray>
      </Taskbar>
    </Page>
  );
}
